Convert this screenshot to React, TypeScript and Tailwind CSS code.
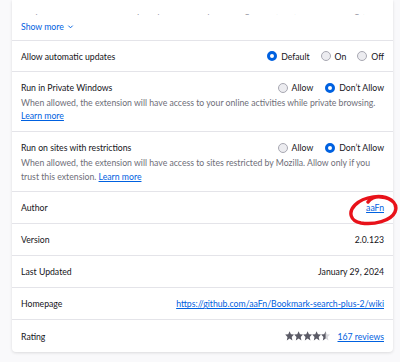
import React from "react";

const font = { fontFamily: 'Lato, "Noto Sans", sans-serif' };

function Radio({ checked, label }: { checked: boolean; label: string }) {
  return (
    <label className="flex items-center gap-[4px]">
      {checked ? (
        <span className="w-[10px] h-[10px] rounded-full border-[3px] border-[#0061e0] bg-white box-border" />
      ) : (
        <span className="w-[10px] h-[10px] rounded-full border border-[#a8a8b2] bg-[#ececf0] box-border" />
      )}
      <span className="text-[#15141a]">{label}</span>
    </label>
  );
}

function Star({ fill }: { fill: "full" | "half" }) {
  const d = "M5 0.2 L6.45 3.3 L9.8 3.6 L7.3 5.9 L8.05 9.4 L5 7.6 L1.95 9.4 L2.7 5.9 L0.2 3.6 L3.55 3.3 Z";
  return (
    <svg width="9.2" height="10" viewBox="0 0 10 10" preserveAspectRatio="none">
      {fill === "full" ? (
        <path d={d} fill="#5b5b66" />
      ) : (
        <>
          <defs>
            <clipPath id="halfclip">
              <rect x="0" y="0" width="5" height="10" />
            </clipPath>
          </defs>
          <path d={d} fill="#d7d7db" />
          <path d={d} fill="#5b5b66" clipPath="url(#halfclip)" />
        </>
      )}
    </svg>
  );
}

function Row({ label, children, extra }: { label: string; children: React.ReactNode; extra?: React.ReactNode }) {
  return (
    <div className="relative flex items-center justify-between h-[32px] px-[9px] border-b border-[#e4e4e9] last:border-b-0">
      <span className="text-[#15141a]">{label}</span>
      <div className="flex items-center">{children}</div>
      {extra}
    </div>
  );
}

export default function App() {
  return (
    <div className="w-[400px] h-[362px] bg-[#f9f9fb] overflow-hidden text-[8.7px] leading-[13px]" style={font}>
      <div className="ml-[12px] w-[381px] bg-white rounded-b-[4px] shadow-[0_1px_3px_rgba(0,0,0,0.12)]">
        <div className="px-[9px] pt-[14px] h-[41px] border-b border-[#e4e4e9]">
          <div className="h-[2px] overflow-hidden">
            <div className="mt-[-11px] text-[#8f8f9d] whitespace-nowrap">
              Keep track of bookmarks and quickly find them by searching names, urls, and 20000+ tags, etc.
            </div>
          </div>
          <div className="mt-[4px] flex items-center gap-[3px] text-[#0061e0]">
            <span>Show more</span>
            <svg width="7" height="7" viewBox="0 0 8 8">
              <path d="M1.5 3 L4 5.5 L6.5 3" stroke="#0061e0" strokeWidth="1.1" fill="none" />
            </svg>
          </div>
        </div>

        <div className="flex items-center justify-between h-[31px] px-[9px] border-b border-[#e4e4e9]">
          <span className="text-[#15141a]">Allow automatic updates</span>
          <div className="flex items-center gap-[11px]">
            <Radio checked label="Default" />
            <Radio checked={false} label="On" />
            <Radio checked={false} label="Off" />
          </div>
        </div>

        <div className="px-[9px] pt-[9px] h-[60px] border-b border-[#e4e4e9]">
          <div className="flex items-center justify-between">
            <span className="text-[#15141a]">Run in Private Windows</span>
            <div className="flex items-center gap-[12px]">
              <Radio checked={false} label="Allow" />
              <Radio checked label="Don’t Allow" />
            </div>
          </div>
          <div className="mt-[2px] text-[#6e6e78] leading-[13px]">
            When allowed, the extension will have access to your online activities while private browsing.
            <br />
            <a className="text-[#0061e0] underline">Learn more</a>
          </div>
        </div>

        <div className="px-[9px] pt-[9px] h-[60px] border-b border-[#e4e4e9]">
          <div className="flex items-center justify-between">
            <span className="text-[#15141a]">Run on sites with restrictions</span>
            <div className="flex items-center gap-[12px]">
              <Radio checked={false} label="Allow" />
              <Radio checked label="Don’t Allow" />
            </div>
          </div>
          <div className="mt-[2px] text-[#6e6e78] leading-[14px]">
            When allowed, the extension will have access to sites restricted by Mozilla. Allow only if you
            <br />
            trust this extension. <a className="text-[#0061e0] underline">Learn more</a>
          </div>
        </div>

        <Row
          label="Author"
          extra={
            <svg className="absolute right-[-5px] top-[1px] pointer-events-none" width="52" height="33" viewBox="0 0 52 33">
              <path
                d="M45 7 C37 1 18 3 9 12 C2 19 4 28 15 30 C28 32 45 28 49 19 C52 12 47 5 35 4 C29 3 24 6 22 9"
                stroke="#e8121a"
                strokeWidth="3.4"
                fill="none"
                strokeLinecap="round"
              />
            </svg>
          }
        >
          <a className="text-[#0061e0] underline">aaFn</a>
        </Row>
        <Row label="Version">
          <span className="text-[#15141a]">2.0.123</span>
        </Row>
        <Row label="Last Updated">
          <span className="text-[#15141a]">January 29, 2024</span>
        </Row>
        <Row label="Homepage">
          <a className="text-[#0061e0] underline">https://github.com/aaFn/Bookmark-search-plus-2/wiki</a>
        </Row>
        <Row label="Rating">
          <div className="flex items-center gap-[0px] mr-[7px]">
            <Star fill="full" />
            <Star fill="full" />
            <Star fill="full" />
            <Star fill="full" />
            <Star fill="half" />
          </div>
          <a className="text-[#0061e0] underline">167 reviews</a>
        </Row>
      </div>
    </div>
  );
}
